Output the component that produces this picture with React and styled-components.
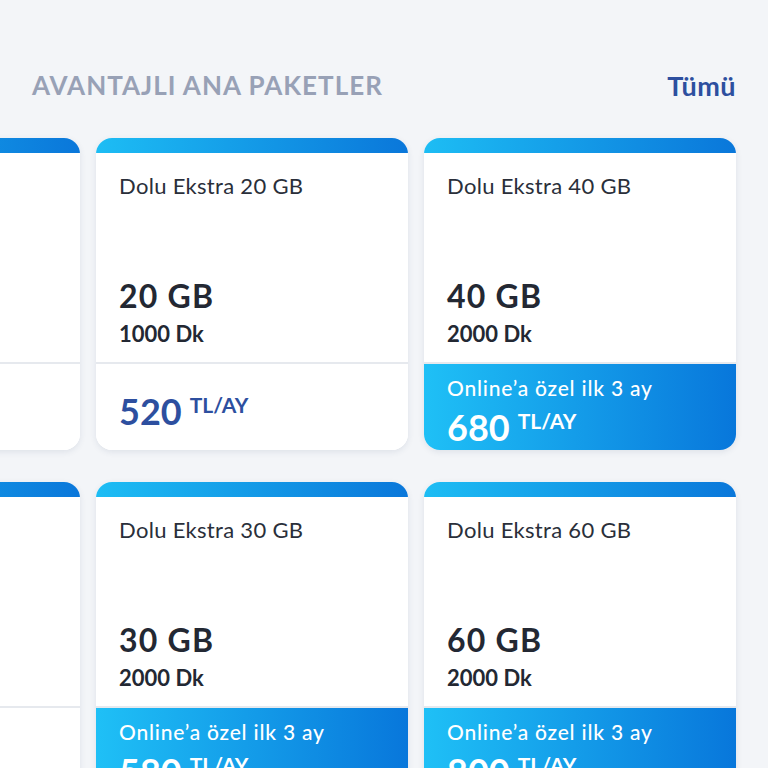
import React from 'react';
import styled, { createGlobalStyle } from 'styled-components';

const GlobalStyle = createGlobalStyle`
  html, body {
    margin: 0;
    padding: 0;
    background: #f3f5f8;
    font-family: Lato, "Noto Sans", sans-serif;
  }
`;

const Page = styled.div`
  width: 768px;
  height: 768px;
  overflow: hidden;
  background: #f3f5f8;
  padding: 62px 32px 0;
  box-sizing: border-box;
`;

const Header = styled.div`
  display: flex;
  align-items: center;
  justify-content: space-between;
  height: 46px;
  margin-bottom: 30px;
`;

const Title = styled.h2`
  margin: 0;
  font-size: 26px;
  font-weight: 700;
  letter-spacing: 1px;
  color: #98a1b6;
`;

const AllLink = styled.a`
  font-size: 27px;
  font-weight: 700;
  letter-spacing: 0.5px;
  color: #2d4f9f;
  text-decoration: none;
`;

const Rows = styled.div`
  display: flex;
  flex-direction: column;
  gap: 32px;
`;

const Track = styled.div`
  display: flex;
  gap: 16px;
  margin-left: -264px;
`;

const Card = styled.div`
  flex: 0 0 312px;
  height: 312px;
  display: flex;
  flex-direction: column;
  background: #fff;
  border-radius: 16px;
  overflow: hidden;
  box-shadow: 0 2px 6px rgba(40, 60, 100, 0.1);
`;

const TopBar = styled.div`
  height: 15px;
  flex-shrink: 0;
  background: linear-gradient(90deg, #1dbdf4 0%, #0a77da 100%);
`;

const Info = styled.div`
  height: 211px;
  box-sizing: border-box;
  padding: 19px 23px 15px;
  display: flex;
  flex-direction: column;
  border-bottom: 2px solid #e6e9ee;
`;

const Name = styled.div`
  font-size: 22px;
  font-weight: 400;
  letter-spacing: 0.3px;
  color: #2a2f3a;
  line-height: 28px;
  flex: 1;
`;

const Data = styled.div`
  font-size: 32px;
  font-weight: 700;
  letter-spacing: 1.2px;
  color: #232833;
  line-height: 38px;
`;

const Minutes = styled.div`
  font-size: 22px;
  font-weight: 700;
  color: #232833;
  line-height: 26px;
  margin-top: 6px;
`;

const PriceArea = styled.div`
  flex: 1;
  display: flex;
  flex-direction: column;
  justify-content: center;
  padding: 8px 23px 0;
  color: ${p => (p.$promo ? '#fff' : '#2d4f9f')};
  background: ${p => (p.$promo ? 'linear-gradient(90deg, #1fc0f6 0%, #0877db 100%)' : '#fff')};
`;

const PromoNote = styled.div`
  font-size: 21px;
  font-weight: 500;
  line-height: 26px;
  letter-spacing: 0.8px;
  margin-bottom: 6px;
`;

const Price = styled.div`
  display: flex;
  align-items: flex-start;
  gap: 8px;
  line-height: 40px;
`;

const Amount = styled.span`
  font-size: 36px;
  font-weight: 700;
`;

const Unit = styled.span`
  font-size: 21px;
  font-weight: 700;
  line-height: 22px;
  margin-top: 3px;
`;

const rows = [
  [
    { name: 'Dolu Ekstra 10 GB', data: '10 GB', min: '1000 Dk', price: '420' },
    { name: 'Dolu Ekstra 20 GB', data: '20 GB', min: '1000 Dk', price: '520' },
    { name: 'Dolu Ekstra 40 GB', data: '40 GB', min: '2000 Dk', price: '680', promo: true },
  ],
  [
    { name: 'Dolu Ekstra 15 GB', data: '15 GB', min: '1000 Dk', price: '480' },
    { name: 'Dolu Ekstra 30 GB', data: '30 GB', min: '2000 Dk', price: '580', promo: true },
    { name: 'Dolu Ekstra 60 GB', data: '60 GB', min: '2000 Dk', price: '800', promo: true },
  ],
];

const PackageCard = ({ item }) => (
  <Card>
    <TopBar />
    <Info>
      <Name>{item.name}</Name>
      <Data>{item.data}</Data>
      <Minutes>{item.min}</Minutes>
    </Info>
    <PriceArea $promo={item.promo}>
      {item.promo && <PromoNote>Online’a özel ilk 3 ay</PromoNote>}
      <Price>
        <Amount>{item.price}</Amount>
        <Unit>TL/AY</Unit>
      </Price>
    </PriceArea>
  </Card>
);

const App = () => (
  <>
    <GlobalStyle />
    <Page>
      <Header>
        <Title>AVANTAJLI ANA PAKETLER</Title>
        <AllLink href="#">Tümü</AllLink>
      </Header>
      <Rows>
        {rows.map((row, i) => (
          <Track key={i}>
            {row.map(item => (
              <PackageCard key={item.name} item={item} />
            ))}
          </Track>
        ))}
      </Rows>
    </Page>
  </>
);

export default App;
